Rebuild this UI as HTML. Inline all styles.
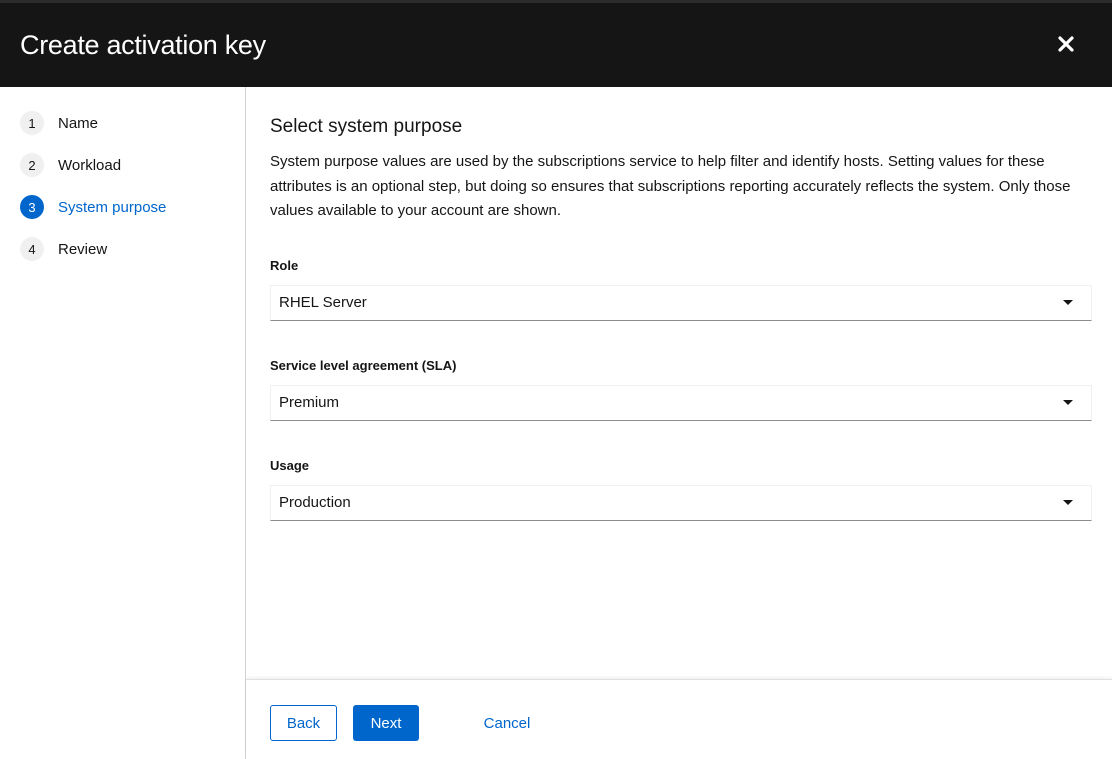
<!DOCTYPE html>
<html><head><style>
*{box-sizing:border-box;margin:0;padding:0}
body{width:1112px;height:759px;overflow:hidden;background:#fff;font-family:"Liberation Sans",sans-serif;color:#151515;position:relative}
.hdr{position:absolute;left:0;top:0;width:1112px;height:87px;background:#151515;border-top:3px solid #2b2b2b}
.hdr h1{position:absolute;left:20px;top:27px;font-size:27px;font-weight:normal;color:#fff;letter-spacing:-0.3px}
.x{position:absolute;left:1057px;top:32px;width:18px;height:18px}
.side{position:absolute;left:0;top:87px;width:246px;height:672px;border-right:1px solid #d2d2d2}
.step{position:absolute;left:20px;height:24px;display:flex;align-items:center;font-size:15px}
.num{width:24px;height:24px;border-radius:50%;background:#f0f0f0;color:#151515;font-size:13px;display:flex;align-items:center;justify-content:center;margin-right:14px}
.act .num{background:#0066cc;color:#fff}
.act{color:#0066cc}
.main{position:absolute;left:270px}
h2{position:absolute;left:270px;top:116px;font-size:19px;font-weight:normal}
.desc{position:absolute;left:270px;top:150px;width:830px;font-size:15px;line-height:24.5px}
.lbl{position:absolute;left:270px;font-size:13px;font-weight:bold}
.sel{position:absolute;left:270px;width:822px;height:36px;border:1px solid #f0f0f0;border-bottom:1px solid #8a8d90;font-size:15px;padding:8px 8px}
.sel:after{content:"";position:absolute;right:18px;top:14px;border-left:5px solid transparent;border-right:5px solid transparent;border-top:5px solid #151515}
.foot{position:absolute;left:246px;top:679px;width:866px;height:80px;border-top:1px solid #e0e0e0;box-shadow:0 -2px 3px rgba(0,0,0,0.05)}
.btn{position:absolute;top:705px;height:36px;border-radius:3px;font-size:15px;display:flex;align-items:center;justify-content:center}
</style></head><body>
<div class="hdr"><h1>Create activation key</h1>
<svg class="x" viewBox="0 0 18 18"><path d="M3 3L15 15M15 3L3 15" stroke="#fff" stroke-width="3.2" stroke-linecap="round"/></svg></div>
<div class="side">
<div class="step" style="top:24px"><span class="num">1</span>Name</div>
<div class="step" style="top:66px"><span class="num">2</span>Workload</div>
<div class="step act" style="top:108px"><span class="num">3</span>System purpose</div>
<div class="step" style="top:150px"><span class="num">4</span>Review</div>
</div>
<h2>Select system purpose</h2>
<div class="desc">System purpose values are used by the subscriptions service to help filter and identify hosts. Setting values for these attributes is an optional step, but doing so ensures that subscriptions reporting accurately reflects the system. Only those values available to your account are shown.</div>
<div class="lbl" style="top:258px">Role</div>
<div class="sel" style="top:285px">RHEL Server</div>
<div class="lbl" style="top:358px">Service level agreement (SLA)</div>
<div class="sel" style="top:385px">Premium</div>
<div class="lbl" style="top:458px">Usage</div>
<div class="sel" style="top:485px">Production</div>
<div class="foot"></div>
<div class="btn" style="left:270px;width:67px;border:1px solid #0066cc;color:#0066cc">Back</div>
<div class="btn" style="left:353px;width:66px;background:#0066cc;color:#fff">Next</div>
<div class="btn" style="left:470px;width:74px;color:#0066cc">Cancel</div>
</body></html>
